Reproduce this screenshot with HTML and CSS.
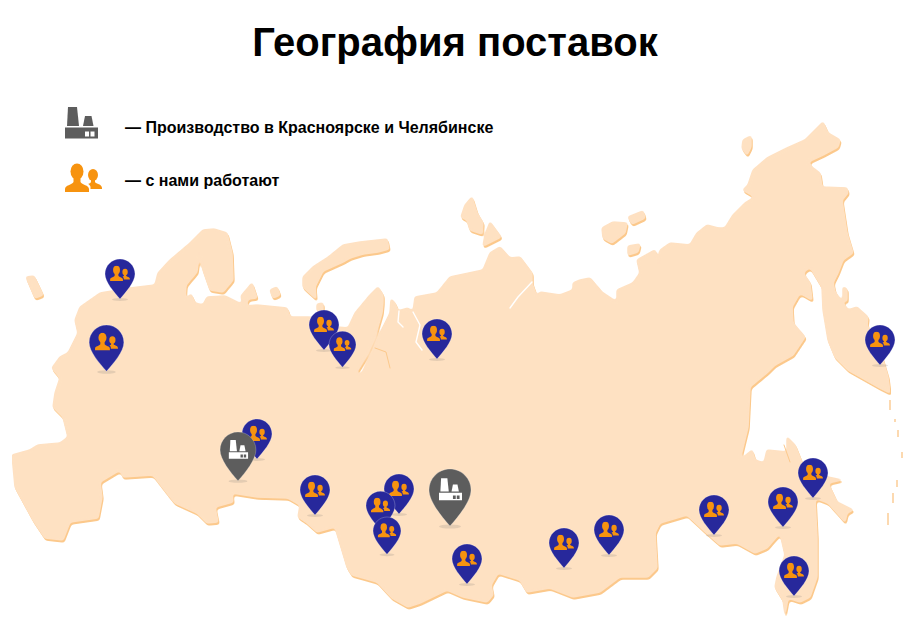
FILE: index.html
```html
<!DOCTYPE html>
<html lang="ru">
<head>
<meta charset="utf-8">
<title>География поставок</title>
<link rel="stylesheet" href="styles.css">
</head>
<body>
<main class="page">
  <svg class="map" viewBox="0 0 917 624" aria-hidden="true">
    <defs>
      <filter id="soft" x="0" y="0" width="100%" height="100%" filterUnits="objectBoundingBox">
        <feGaussianBlur stdDeviation="1.6"/>
        <feComponentTransfer>
          <feFuncA type="linear" slope="4" intercept="-1.5"/>
        </feComponentTransfer>
      </filter>
      <g id="land">
        <path id="main" d="M190 243L203 230L214 229L227 233L232 253L233 280L223 292L210 290L203 270L199 253L197 272L186 285L185 300L191 294L195 303L203 305L207 297L225 296L243 305L241 296L252 283L257 298L248 299L246 306L257 305L287 308L290 317L310 317L338 327L348 328L355 313L370 295L378 287L383 295L383 303L382 313L375 337L368 353L358 370L354 375L362 373L373 350L380 333L390 313L391 299L395 303L398 311L408 308L413 312L415 297L437 293L450 277L483 270L490 253L500 247L510 258L520 257L532 273L532 283L537 297L540 292L560 295L573 290L573 283L580 280L590 278L602 292L617 302L617 290L633 283L640 273L637 260L655 250L658 263L660 250L670 243L690 245L697 233L707 225L718 228L725 228L733 215L745 203L755 197L743 190L748 185L753 170L767 158L787 148L805 140L823 122L828 133L840 140L838 147L823 155L808 162L812 167L820 173L822 187L847 188L848 193L842 200L847 233L853 253L843 260L838 273L833 283L835 292L848 310L857 307L868 317L867 325L880 350L888 377L890 393L880 388L848 370L835 357L828 340L823 310L822 287L810 267L803 273L810 283L812 300L800 293L792 307L793 323L805 337L793 355L775 365L768 372L750 387L748 427L740 460L752 450L755 460L764 463L767 450L787 452L787 437L795 445L805 470L828 477L842 480L828 483L837 502L853 510L847 513L845 522L837 513L828 503L815 498L817 537L817 577L810 597L800 602L788 598L785 615L783 600L775 587L777 577L785 555L780 533L767 548L755 553L737 543L720 545L703 530L687 515L660 523L655 533L657 568L648 577L620 577L600 592L573 597L550 588L527 592L520 580L498 573L491 585L493 595L487 602L463 597L447 590L420 603L408 607L392 598L377 582L363 578L352 575L347 567L335 527L317 532L307 523L298 517L300 505L288 498L257 497L232 493L233 502L215 507L218 522L207 523L197 513L175 503L170 497L153 475L123 477L120 470L100 482L102 497L98 518L70 522L63 540L45 538L33 520L15 487L12 455L30 450L38 445L60 443L68 437L63 417L53 407L55 393L60 378L52 368L60 357L68 353L78 333L75 320L80 307L100 293L130 288L155 285L158 273L170 260Z"/>
        <path d="M26 277L34 276L43 295L35 298Z"/>
        <path d="M270 290L277 287L280 295L273 298Z"/>
        <path d="M303 277L313 267L327 258L343 245L360 242L387 239L389 249L378 252L363 254L350 258L343 262L323 271L315 287L316 299L303 287Z"/>
        <path d="M472 197L477 213L483 223L482 234L470 230L467 220L461 217L465 205Z"/>
        <path d="M490 222L501 237L483 246L485 235Z"/>
        <path d="M602 228L613 222L627 223L625 233L612 243L603 238Z"/>
        <path d="M628 217L643 211L645 218L632 224Z"/>
        <path d="M628 246L640 244L638 252L628 255Z"/>
        <path d="M743 140L751 136L751 147L747 155L742 148Z"/>
        <path d="M843 287L847 289L847 301L843 301Z"/>
        <path d="M317 304L323 303L323 311L317 311Z"/>
      </g>
      <symbol id="people" viewBox="0 0 37 29">
        <ellipse cx="12" cy="8.500" rx="6.500" ry="8"/>
        <path d="M0 29V26C0 22 7 22 8.500 19V14H15.500V19C17 22 24 22 24 26V29Z"/>
        <ellipse cx="28" cy="12" rx="5" ry="6"/>
        <path d="M26 17H30V19C31 21 37 21 37 25V26H25.500V24C25.500 23 24 21 23 21C25 20.500 26 20 26 18Z"/>
      </symbol>
      <symbol id="factory" viewBox="0 0 33 32">
        <path d="M3 0H12L14 19H2Z"/>
        <path d="M20 9H26.500L28.500 19H18Z"/>
        <path fill-rule="evenodd" d="M0 20.500H33V31.500H0ZM20 24.500V29.500H24V24.500ZM25.500 24.500V29.500H29.500V24.500Z"/>
      </symbol>
      <symbol id="pin-blue" viewBox="0 0 30 44" overflow="visible">
        <ellipse class="pin-shadow" cx="15" cy="40.500" rx="8" ry="1.500"/>
        <path class="pin-blue" d="M15 0C23.300 0 30 6.700 30 15C30 23 21 33 15 40C9 33 0 23 0 15C0 6.700 6.700 0 15 0Z"/>
        <use class="icon-orange" href="#people" x="5" y="6.500" width="20" height="15.500"/>
      </symbol>
      <symbol id="pin-gray" viewBox="0 0 42 62" overflow="visible">
        <ellipse class="pin-shadow" cx="21" cy="57.500" rx="11" ry="2"/>
        <path class="pin-gray" d="M21 0C32.600 0 42 9.400 42 21C42 32 30 47 21 57C12 47 0 32 0 21C0 9.400 9.400 0 21 0Z"/>
        <use class="icon-white" href="#factory" x="10" y="9" width="23" height="23"/>
      </symbol>
    </defs>
    <g class="soft">
      <use class="land-shadow" href="#land" x="1" y="2"/>
    </g>
    <g class="soft">
      <use class="land" href="#land"/>
    </g>
    <path class="gulf fine" d="M399 311L398 322L403 327"/>
    <path class="gulf thin" d="M375 348L386 352L390 368"/>
    <path class="gulf fine" d="M413 312L420 325L416 342L422 350"/>
    <path class="gulf fine" d="M532 282L518 297L510 308"/>
    <path class="gulf thin" d="M784 445L790 462"/>
    <path class="kuril" d="M890 400V410M895 419V422M898 430V437M902 452V458M897 480V487M893 493V503M888 513V525"/>

    <use href="#pin-blue" x="105" y="259" width="30" height="44"/>
    <use href="#pin-blue" x="89" y="325" width="35" height="51"/>
    <use href="#pin-blue" x="422" y="319" width="30" height="44"/>
    <use href="#pin-blue" x="309" y="310" width="30" height="44"/>
    <use href="#pin-blue" x="329" y="331" width="27" height="40"/>
    <use href="#pin-blue" x="865" y="325" width="30" height="44"/>
    <use href="#pin-blue" x="242" y="419" width="30" height="44"/>
    <use href="#pin-gray" x="220" y="432" width="36" height="53"/>
    <use href="#pin-blue" x="300" y="475" width="30" height="44"/>
    <use href="#pin-blue" x="384" y="474" width="30" height="44"/>
    <use href="#pin-blue" x="366" y="491" width="29" height="43"/>
    <use href="#pin-blue" x="373" y="517" width="28" height="41"/>
    <use href="#pin-gray" x="429" y="469" width="42" height="62"/>
    <use href="#pin-blue" x="452" y="544" width="30" height="44"/>
    <use href="#pin-blue" x="549" y="528" width="30" height="44"/>
    <use href="#pin-blue" x="594" y="515" width="30" height="44"/>
    <use href="#pin-blue" x="699" y="495" width="30" height="44"/>
    <use href="#pin-blue" x="768" y="487" width="30" height="44"/>
    <use href="#pin-blue" x="798" y="458" width="30" height="44"/>
    <use href="#pin-blue" x="779" y="556" width="30" height="44"/>
  </svg>

  <div class="content">
    <h1 class="title">География поставок</h1>
    <ul class="legend">
      <li class="legend-row">
        <svg class="legend-icon icon-gray" viewBox="0 0 37 32"><use href="#factory" x="0" y="0" width="33" height="32"/></svg>
        <span class="legend-text">— Производство в Красноярске и Челябинске</span>
      </li>
      <li class="legend-row">
        <svg class="legend-icon icon-orange" viewBox="0 0 37 32"><use href="#people" x="0" y="3" width="37" height="29"/></svg>
        <span class="legend-text">— с нами работают</span>
      </li>
    </ul>
  </div>
</main>
</body>
</html>
```
FILE: styles.css
```css
html, body {
  margin: 0;
  background: #fff;
}

.page {
  display: grid;
  width: 917px;
  height: 624px;
  overflow: hidden;
  font-family: "Liberation Sans", Arial, sans-serif;
  color: #000;
}

.map,
.content {
  grid-area: 1 / 1;
}

.map {
  display: block;
  width: 917px;
  height: 624px;
}

.content {
  display: flex;
  flex-direction: column;
}

.title {
  margin: 0;
  padding: 19px 7px 0 0;
  font-size: 40px;
  line-height: 46px;
  font-weight: 700;
  text-align: center;
}

.legend {
  list-style: none;
  margin: 42px 0 0;
  padding: 0 0 0 65px;
  display: flex;
  flex-direction: column;
  gap: 21px;
}

.legend-row {
  display: flex;
  align-items: center;
  gap: 23px;
}

.legend-icon {
  width: 37px;
  height: 32px;
  flex: none;
}

.legend-text {
  padding-top: 10px;
  font-size: 16px;
  font-weight: 700;
  line-height: 18px;
}

.soft { filter: url(#soft); }
.land { fill: #fee1c2; stroke: #fee1c2; stroke-width: 1.5; stroke-linejoin: round; }
.land-shadow { fill: #fcc98c; stroke: #fcc98c; stroke-width: 1.5; stroke-linejoin: round; }
.gulf { fill: none; stroke: #fff; stroke-width: 2; stroke-linecap: round; stroke-linejoin: round; }
.fine { stroke-width: 1.4; }
.thin { stroke: #fcc98c; stroke-width: 1; }
.kuril { fill: none; stroke: #fcd9b0; stroke-width: 2; }
.pin-blue { fill: #27289b; stroke: #fff; stroke-opacity: .5; stroke-width: .5; }
.pin-gray { fill: #5d5d5d; stroke: #fff; stroke-opacity: .5; stroke-width: .5; }
.pin-shadow { fill: #a99d90; opacity: .3; }
.icon-orange { fill: #f7930f; }
.icon-white { fill: #fff; }
.icon-gray { fill: #5d5d5d; }
```
